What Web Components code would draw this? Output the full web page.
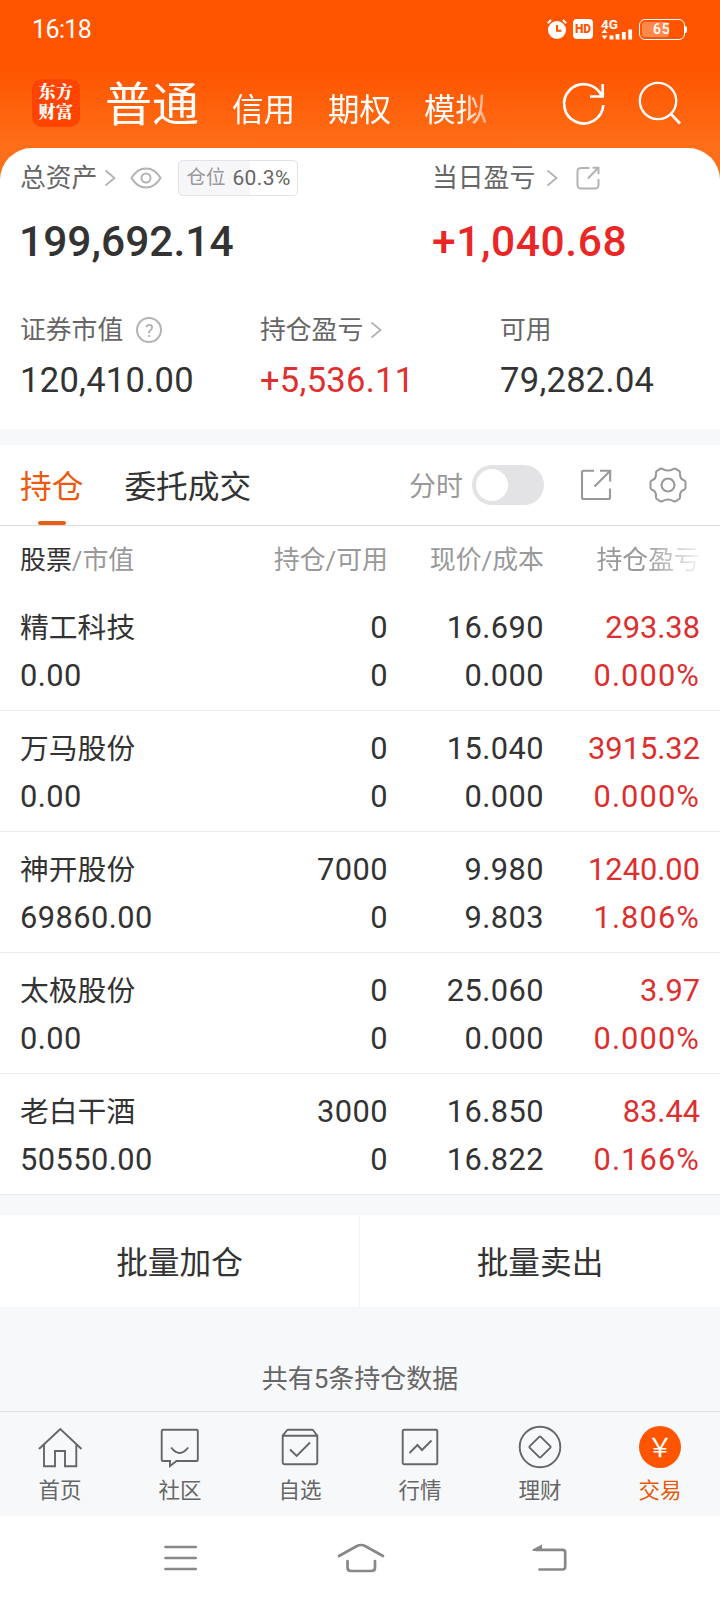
<!DOCTYPE html>
<html lang="zh-CN">
<head>
<meta charset="utf-8">
<title>交易</title>
<style>
body {
    margin: 0;
    width: 720px;
    background: #f7f8fa;
    color: #333;
    font-family: Roboto, "Noto Sans CJK SC", sans-serif;
}
</style>
</head>
<body>
<trade-app></trade-app>

<script>
(function () {
    const icons = {
        alarm: [20, 20, `<g fill="currentColor" stroke="none"><circle cx="10" cy="11" r="9"/></g><path d="M.8 4.200 4 1M19.200 4.200 16 1" stroke-width="2"/><path d="M10 6v5.800h4.500" stroke="#ff5500" stroke-width="2"/>`],
        signal: [32, 11, `<path d="M3.500 0 6.500 4H.5ZM3.500 10.500 6.500 6.500H.5Z" fill="currentColor" stroke="none"/><path d="M10.500 10.500V6.500M16.500 10.500V5M22.800 10.500V3M29.200 10.500V.5" stroke-width="3.800"/>`],
        refresh: [46, 46, `<path d="M42.300 24A19.600 19.600 0 1 1 40.500 14.500" stroke-width="2.700"/><path d="M41.700 3v12.500H29" stroke-width="2.700"/>`],
        search: [46, 46, `<circle cx="21" cy="20" r="18.200" stroke-width="2.300"/><path d="m33.500 32.500 9.500 10" stroke-width="2.600"/>`],
        chevron: [12, 18, `<path d="m1.500 1.500 9 7.500-9 7.500" stroke-width="1.800"/>`],
        eye: [32, 22, `<path d="M1.500 11C5 5 10 1.500 16 1.500S27 5 30.500 11C27 17 22 20.500 16 20.500S5 17 1.500 11Z" stroke-width="2"/><circle cx="16" cy="11" r="4.500" stroke-width="2"/>`],
        share: [24, 24, `<path d="M13.500 2H5a3.500 3.500 0 0 0-3.500 3.500V19A3.500 3.500 0 0 0 5 22.500h14a3.500 3.500 0 0 0 3.500-3.500v-6" stroke-width="2"/><path d="M12 12.500 22 2M16.500 1.800h6v6.500" stroke-width="2"/>`],
        shareSquare: [32, 32, `<path d="M14 1.800H3.500A1.500 1.500 0 0 0 2 3.300V28.500A1.500 1.500 0 0 0 3.500 30h25a1.500 1.500 0 0 0 1.500-1.500V19.500" stroke-width="2.100"/><path d="M14.500 17.500 30 2M20 1.800h10.200V12.500" stroke-width="2.100"/>`],
        gear: [38, 38, `<path d="M11.500 2.700Q12.800 2 14 3.200Q19 6 24 3.200Q25.200 2 26.500 2.700L30 4.800Q31.200 5.500 31 7Q30.500 13 35.300 14.500Q36.500 15 36.500 16.200V21.800Q36.500 23 35.300 23.500Q30.500 25 31 31Q31.200 32.500 30 33.200L26.500 35.300Q25.200 36 24 34.800Q19 32 14 34.800Q12.800 36 11.500 35.300L8 33.200Q6.800 32.500 7 31Q7.500 25 2.700 23.500Q1.500 23 1.500 21.800V16.200Q1.500 15 2.700 14.500Q7.500 13 7 7Q6.800 5.500 8 4.800Z" stroke-width="2" stroke-linejoin="round"/><circle cx="19" cy="19" r="6.500" stroke-width="2.100"/>`],
        home: [44, 44, `<path d="M1 24 22.300 4 43.500 24M6 20V41.300H17V26H27V41.300H38.300V20"/>`],
        chat: [44, 44, `<path d="M5 4.700H38.500A1.300 1.300 0 0 1 39.800 6V34.700A1.300 1.300 0 0 1 38.500 36H18.500L12 41V36H5A1.300 1.300 0 0 1 3.700 34.700V6A1.300 1.300 0 0 1 5 4.700ZM13.200 22.500Q21.500 33.500 30.200 22.500"/>`],
        box: [44, 44, `<path d="M4.700 10.700H39.300V37.500A2 2 0 0 1 37.300 39.300H6.700A2 2 0 0 1 4.700 37.500V10.700L9 5.300Q9.400 4.700 10.200 4.700H34Q34.700 4.700 35.200 5.300L39.300 10.700M12 24.500 18.700 31 32 17.500"/>`],
        chart: [44, 44, `<rect x="4.700" y="4.700" width="34.600" height="34.600" rx="1.300"/><path d="m11.500 28 8-8 4.500 5 9.500-9.500"/>`],
        diamond: [44, 44, `<circle cx="22" cy="22" r="20.300"/><path d="M21.200 11.800Q22 11 22.800 11.800L32.200 21.200Q33 22 32.200 22.800L22.800 32.200Q22 33 21.200 32.200L11.800 22.800Q11 22 11.800 21.200Z"/>`],
        menu: [34, 26, `<path d="M2.500 2h30.200M2.500 13h30.200M2.500 24h30.200" stroke-width="2.700" stroke-linecap="round"/>`],
        desktop: [48, 30, `<path d="M2 13 19.500 3.200Q24 .8 28.500 3.200L46 13M10.500 18V24.500Q10.500 28 14 28H34.500Q38 28 38 24.500V18" stroke-width="2.700" stroke-linecap="round"/>`],
        back: [36, 28, `<path d="M4 5.800H30.500Q33.200 5.800 33.200 8.500V22.800Q33.200 25.500 30.500 25.500H7.500" stroke-width="2.700" stroke-linecap="round"/><path d="M.5 7V5.500L10 .5V7Z" fill="currentColor" stroke="none"/>`]
    };

    class UiIcon extends HTMLElement {
        constructor() {
            super();
            this.attachShadow({ mode: 'open' });
        }

        connectedCallback() {
            const [w, h, body] = icons[this.getAttribute('name')];
            this.shadowRoot.innerHTML = `
<style>
:host { display: block; flex: none; }
svg { display: block; overflow: visible; }
</style>
<svg width="${w}" height="${h}" viewBox="0 0 ${w} ${h}" fill="none" stroke="currentColor" stroke-width="1.900">${body}</svg>`;
        }
    }
    customElements.define('ui-icon', UiIcon);

    // registers an element whose shadow root is a copy of fixed markup
    function component(name, html) {
        const template = document.createElement('template');
        template.innerHTML = html;

        customElements.define(name, class extends HTMLElement {
            constructor() {
                super();
                this.attachShadow({ mode: 'open' }).appendChild(template.content.cloneNode(true));
            }
        });
    }

    component('status-bar', `
<style>
:host {
    display: flex;
    align-items: center;
    height: 58px;
    padding: 0 32px;
    box-sizing: border-box;
    color: white;
}
time {
    flex: 1;
    font-size: 25px;
    letter-spacing: -0.6px;
}
.hd {
    width: 20px;
    height: 20px;
    margin: 0 8px 0 6px;
    border-radius: 4px;
    background: white;
    color: #ff5500;
    font: 900 12px/20px Roboto, sans-serif;
    text-align: center;
}
.net {
    width: 32px;
    margin-right: 6px;
    font: 700 13.500px/11px Roboto, sans-serif;
}
.net ui-icon { margin-top: -1px; }
.battery {
    width: 46px;
    height: 21px;
    box-sizing: border-box;
    border: 1.500px solid white;
    border-radius: 6px;
    padding: 2px;
}
.level {
    width: 27px;
    height: 100%;
    border-radius: 3px;
    background: rgba(255, 255, 255, 0.3);
    font: 500 14px/15px Roboto, sans-serif;
    letter-spacing: .8px;
    text-indent: 11px;
    white-space: nowrap;
}
.cap {
    width: 2px;
    height: 7px;
    margin-right: 1px;
    border-radius: 0 2px 2px 0;
    background: white;
}
</style>
<time>16:18</time>
<ui-icon name="alarm"></ui-icon>
<div class="hd">HD</div>
<div class="net">4G<ui-icon name="signal"></ui-icon></div>
<div class="battery"><div class="level">65</div></div>
<div class="cap"></div>
`);

    component('account-nav', `
<style>
:host {
    display: flex;
    height: 90px;
    padding: 0 37px 0 32px;
    box-sizing: border-box;
    color: white;
}
.logo {
    display: grid;
    grid-template-rows: 20px 20px;
    justify-content: center;
    align-content: center;
    width: 48px;
    height: 48px;
    margin-top: 21px;
    box-sizing: border-box;
    border-radius: 10px;
    background: #ff4400;
    font: 900 17px/20px "Liberation Sans", "Noto Serif CJK SC", "Noto Sans CJK SC", serif;
    letter-spacing: .4px;
}
nav {
    display: flex;
    align-items: baseline;
    flex: 1;
    height: 90px;
    gap: 33px;
    margin-left: 25px;
    padding-top: 3px;
    box-sizing: border-box;
    font-size: 31.500px;
    line-height: 86px;
    -webkit-mask: linear-gradient(90deg, #000 355px, rgba(0, 0, 0, .4) 385px);
}
b {
    padding-top: 1px;
    font-size: 47px;
    font-weight: 400;
}
.tools {
    display: flex;
    gap: 30px;
    padding-top: 23px;
}
</style>
<div class="logo"><span>东方</span><span>财富</span></div>
<nav><b>普通</b><span>信用</span><span>期权</span><span>模拟</span></nav>
<div class="tools"><ui-icon name="refresh"></ui-icon><ui-icon name="search"></ui-icon></div>
`);

    component('asset-figure', `
<style>
:host {
    display: block;
    color: #333;
}
.label {
    display: flex;
    align-items: center;
    height: 36px;
    color: #666;
    font-size: 25.800px;
    line-height: 38px;
    white-space: nowrap;
}
.value {
    margin-top: 11px;
    font-size: 34.500px;
    line-height: 42px;
    letter-spacing: .3px;
}
:host([large]) .value {
    margin-top: 25px;
    margin-left: -1px;
    font-size: 42.500px;
    font-weight: 500;
    letter-spacing: 0;
}
:host([up]) .value { color: #df2f2f; }
:host([up][large]) .value { margin-left: 0; color: #ea2727; letter-spacing: .6px; }
::slotted(ui-icon) { color: #b3b3b3; }
</style>
<div class="label"><slot name="label"></slot></div>
<div class="value"><slot></slot></div>
`);

    component('position-tag', `
<style>
:host {
    display: flex;
    align-items: center;
    gap: 7px;
    width: 120px;
    height: 36px;
    box-sizing: border-box;
    border: 1px solid #e2e2e4;
    border-radius: 5px;
    padding-left: 7px;
    background: linear-gradient(90deg, #f7f7fa 60.300%, white 60.300%);
    font-size: 21px;
    letter-spacing: .4px;
    color: #666;
}
span { color: #999; font-size: 19.500px; letter-spacing: 0; }
</style>
<span>仓位</span><slot></slot>
`);

    component('asset-panel', `
<style>
:host {
    display: block;
    height: 281px;
    background: #ff6e18;
}
.sheet {
    height: 281px;
    box-sizing: border-box;
    padding: 12px 20px 0;
    border-radius: 32px 32px 0 0;
    background: white;
}
.total {
    display: grid;
    grid-template-columns: 412px 1fr;
}
.detail {
    display: grid;
    grid-template-columns: 240px 240px 1fr;
    margin-top: 49px;
}
.help {
    width: 26px;
    height: 26px;
    margin-left: 13px;
    box-sizing: border-box;
    border: 2px solid #b3b3b3;
    border-radius: 50%;
    color: #aaa;
    font-size: 18px;
    line-height: 23px;
    text-align: center;
}
</style>
<div class="sheet">
    <div class="total">
        <asset-figure large>
            <span slot="label">总资产</span>
            <ui-icon slot="label" name="chevron" style="margin-left:7px"></ui-icon>
            <ui-icon slot="label" name="eye" style="margin-left:14px"></ui-icon>
            <position-tag slot="label" style="margin-left:16px">60.3%</position-tag>
            199,692.14
        </asset-figure>
        <asset-figure large up>
            <span slot="label">当日盈亏</span>
            <ui-icon slot="label" name="chevron" style="margin-left:11px"></ui-icon>
            <ui-icon slot="label" name="share" style="margin-left:18px"></ui-icon>
            +1,040.68
        </asset-figure>
    </div>
    <div class="detail">
        <asset-figure><span slot="label">证券市值</span><span slot="label" class="help">?</span>120,410.00</asset-figure>
        <asset-figure up><span slot="label">持仓盈亏</span><ui-icon slot="label" name="chevron" style="margin-left:7px"></ui-icon>+5,536.11</asset-figure>
        <asset-figure><span slot="label">可用</span>79,282.04</asset-figure>
    </div>
</div>
`);

    component('holdings-tabs', `
<style>
:host {
    display: flex;
    align-items: center;
    height: 81px;
    margin-top: 16px;
    padding: 0 33px 0 20px;
    box-sizing: border-box;
    border-bottom: 1px solid #dedee0;
    background: white;
    font-size: 31.700px;
}
span {
    height: 80px;
    line-height: 85px;
}
.active {
    position: relative;
    margin-right: 41px;
    color: #eb5a10;
}
.active::after {
    content: "";
    position: absolute;
    left: 18px;
    bottom: 0;
    width: 28px;
    height: 4px;
    border-radius: 2px;
    background: #e75e18;
}
.time {
    margin-left: auto;
    font-size: 27px;
    color: #999;
}
.switch {
    width: 72px;
    height: 40px;
    margin: 0 36px 0 9px;
    padding: 4px;
    box-sizing: border-box;
    border-radius: 20px;
    background: #e3e3e5;
}
.switch i {
    display: block;
    width: 32px;
    height: 32px;
    border-radius: 50%;
    background: white;
}
ui-icon { color: #999; }
ui-icon + ui-icon { margin-left: 37px; }
</style>
<span class="active">持仓</span>
<span>委托成交</span>
<span class="time">分时</span>
<div class="switch"><i></i></div>
<ui-icon name="shareSquare"></ui-icon>
<ui-icon name="gear"></ui-icon>
`);

    class HoldingRow extends HTMLElement {
        constructor() {
            super();
            this.attachShadow({ mode: 'open' });
        }

        connectedCallback() {
            const { name, value, held, usable, price, cost, profit, rate } = this.data;
            this.shadowRoot.innerHTML = `
<style>
:host {
    display: grid;
    grid-template-columns: 211px 157px 156px 156px;
    grid-template-rows: 48px 48px;
    height: 121px;
    box-sizing: border-box;
    padding: 14px 20px 0;
    border-bottom: 1px solid #ebebed;
    font-size: 30.800px;
    line-height: 48px;
    letter-spacing: .45px;
    text-align: right;
    white-space: nowrap;
}
.left { text-align: left; }
.name { font-size: 28.800px; line-height: 49px; letter-spacing: 0; }
.up { color: #dc3030; letter-spacing: 0; }
.rate { letter-spacing: 1.100px; }
</style>
<span class="left name">${name}</span><span>${held}</span><span>${price}</span><span class="up">${profit}</span>
<span class="left">${value}</span><span>${usable}</span><span>${cost}</span><span class="up rate">${rate}</span>`;
        }
    }
    customElements.define('holding-row', HoldingRow);

    const holdings = [
        { name: '精工科技', value: '0.00', held: '0', usable: '0', price: '16.690', cost: '0.000', profit: '293.38', rate: '0.000%' },
        { name: '万马股份', value: '0.00', held: '0', usable: '0', price: '15.040', cost: '0.000', profit: '3915.32', rate: '0.000%' },
        { name: '神开股份', value: '69860.00', held: '7000', usable: '0', price: '9.980', cost: '9.803', profit: '1240.00', rate: '1.806%' },
        { name: '太极股份', value: '0.00', held: '0', usable: '0', price: '25.060', cost: '0.000', profit: '3.97', rate: '0.000%' },
        { name: '老白干酒', value: '50550.00', held: '3000', usable: '0', price: '16.850', cost: '16.822', profit: '83.44', rate: '0.166%' }
    ];

    class HoldingsTable extends HTMLElement {
        constructor() {
            super();
            this.attachShadow({ mode: 'open' }).innerHTML = `
<style>
:host {
    display: block;
    background: white;
}
header {
    display: grid;
    grid-template-columns: 211px 157px 156px 156px;
    height: 64px;
    padding: 0 20px;
    color: #999;
    font-size: 25.900px;
    line-height: 69px;
    text-align: right;
}
.stock { text-align: left; }
.stock b { color: #333; font-weight: 400; }
.fade { -webkit-mask: linear-gradient(90deg, #000 65%, rgba(0, 0, 0, .15) 98%); }
</style>
<header>
    <span class="stock"><b>股票</b>/市值</span><span>持仓/可用</span><span>现价/成本</span><span class="fade">持仓盈亏</span>
</header>`;
        }

        connectedCallback() {
            for (const data of holdings) {
                const row = document.createElement('holding-row');
                row.data = data;
                this.shadowRoot.appendChild(row);
            }
        }
    }
    customElements.define('holdings-table', HoldingsTable);

    component('batch-actions', `
<style>
:host {
    display: grid;
    grid-template-columns: 359px 1fr;
    height: 92px;
    margin-top: 20px;
    background: white;
    font-size: 31.700px;
    line-height: 97px;
    text-align: center;
}
span { height: 92px; }
span + span { border-left: 1px solid #f3f3f5; }
</style>
<span>批量加仓</span><span>批量卖出</span>
`);

    class TabItem extends HTMLElement {
        constructor() {
            super();
            this.attachShadow({ mode: 'open' });
        }

        connectedCallback() {
            const icon = this.getAttribute('icon');
            this.shadowRoot.innerHTML = `
<style>
:host {
    display: flex;
    flex-direction: column;
    align-items: center;
    padding-top: 13px;
    color: #666;
    font-size: 21.500px;
    line-height: 30px;
}
:host([active]) { color: #e8590c; }
.coin {
    width: 42px;
    height: 42px;
    margin: 1px;
    border-radius: 50%;
    background: #ff5500;
    color: white;
    font: 400 26px/39px "Noto Sans CJK SC", sans-serif;
    text-align: center;
}
slot { display: block; margin-top: 7px; }
</style>
${icon ? `<ui-icon name="${icon}"></ui-icon>` : '<div class="coin">&#xFFE5;</div>'}
<slot></slot>`;
        }
    }
    customElements.define('tab-item', TabItem);

    component('tab-bar', `
<style>
:host {
    display: grid;
    grid-template-columns: repeat(6, 1fr);
    height: 105px;
    box-sizing: border-box;
    border-top: 1px solid #dfdfe2;
    background: #f7f8fa;
}
</style>
<tab-item icon="home">首页</tab-item>
<tab-item icon="chat">社区</tab-item>
<tab-item icon="box">自选</tab-item>
<tab-item icon="chart">行情</tab-item>
<tab-item icon="diamond">理财</tab-item>
<tab-item active>交易</tab-item>
`);

    component('system-nav', `
<style>
:host {
    display: flex;
    justify-content: space-between;
    align-items: center;
    height: 84px;
    padding: 0 152px 0 163px;
    box-sizing: border-box;
    background: white;
    color: #888;
}
[name=desktop] { margin-right: 8px; }
</style>
<ui-icon name="menu"></ui-icon><ui-icon name="desktop"></ui-icon><ui-icon name="back"></ui-icon>
`);

    component('trade-app', `
<style>
:host {
    display: flex;
    flex-direction: column;
    height: 1600px;
}
.top { background: linear-gradient(#ff5500 68px, #ff6e18 148px); }
.count {
    flex: 1;
    padding-top: 53px;
    color: #666;
    font-size: 26px;
    line-height: 38px;
    text-align: center;
}
</style>
<div class="top">
    <status-bar></status-bar>
    <account-nav></account-nav>
</div>
<asset-panel></asset-panel>
<holdings-tabs></holdings-tabs>
<holdings-table></holdings-table>
<batch-actions></batch-actions>
<div class="count">共有5条持仓数据</div>
<tab-bar></tab-bar>
<system-nav></system-nav>
`);
})();
</script>
</body>
</html>
